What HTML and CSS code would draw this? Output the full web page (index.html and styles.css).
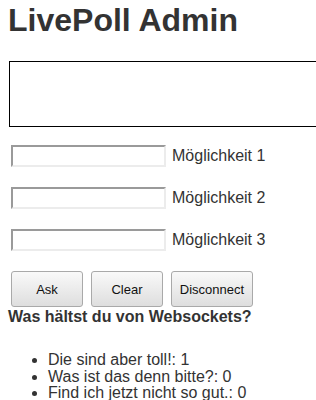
FILE: index.html
```html
<!DOCTYPE html>
<html lang="de">
<head>
  <meta charset="UTF-8">
  <title>LivePoll Admin</title>
  <link rel="stylesheet" href="styles.css">
</head>
<body>
  <h1>LivePoll Admin</h1>
  <textarea id="frage" class="frage"></textarea>

  <!-- Antwortmöglichkeiten -->
  <div class="optionen">
    <div class="option"><input type="text" id="opt1"><label for="opt1">Möglichkeit 1</label></div>
    <div class="option"><input type="text" id="opt2"><label for="opt2">Möglichkeit 2</label></div>
    <div class="option"><input type="text" id="opt3"><label for="opt3">Möglichkeit 3</label></div>
  </div>

  <div class="aktionen">
    <button class="btn btn-klein">Ask</button>
    <button class="btn btn-klein">Clear</button>
    <button class="btn">Disconnect</button>
  </div>

  <h3 class="ergebnis-titel">Was hältst du von Websockets?</h3>
  <ul class="ergebnisse">
    <li>Die sind aber toll!: 1</li>
    <li>Was ist das denn bitte?: 0</li>
    <li>Find ich jetzt nicht so gut.: 0</li>
  </ul>
</body>
</html>
```

FILE: styles.css
```css
body {
  font-family: "Liberation Sans", Arial, sans-serif;
  font-size: 16px;
  color: #333;
  background: #fff;
  margin: 0;
  padding: 0 8px;
  overflow: hidden;
}
h1 {
  font-size: 32px;
  line-height: 37px;
  margin: 2px 0 0 0;
  font-weight: bold;
}
.frage {
  display: block;
  box-sizing: border-box;
  width: 340px;
  height: 66px;
  margin: 22px 0 0 1px;
  border: 1px solid #000;
  resize: none;
  padding: 2px;
}
.optionen {
  display: flex;
  flex-direction: column;
  gap: 20px;
  margin-top: 18px;
}
.option {
  display: flex;
  align-items: center;
  height: 22px;
}
.option input {
  box-sizing: border-box;
  width: 155px;
  height: 22px;
  margin: 0 6px 0 3px;
  padding: 1px 2px;
  border-style: solid;
  border-width: 2px;
  border-color: #9a9a9a #ececec #ececec #9a9a9a;
  background: #fff;
}
.option label {
  line-height: 20px;
}
.aktionen {
  display: flex;
  gap: 8px;
  margin: 20px 0 0 3px;
}
.btn {
  box-sizing: border-box;
  width: 82px;
  height: 36px;
  padding: 0;
  font-family: "Liberation Sans", Arial, sans-serif;
  font-size: 13px;
  color: #111;
  background: linear-gradient(#f9f9f9, #dedede);
  border: 1px solid #a9a9a9;
  border-radius: 3px;
}
.btn-klein { width: 72px; }
.ergebnis-titel {
  font-size: 16px;
  line-height: 18px;
  margin: 1px 0 0 0;
}
.ergebnisse {
  margin: 26px 0 0 0;
  padding-left: 40px;
  line-height: 16.5px;
}
```
